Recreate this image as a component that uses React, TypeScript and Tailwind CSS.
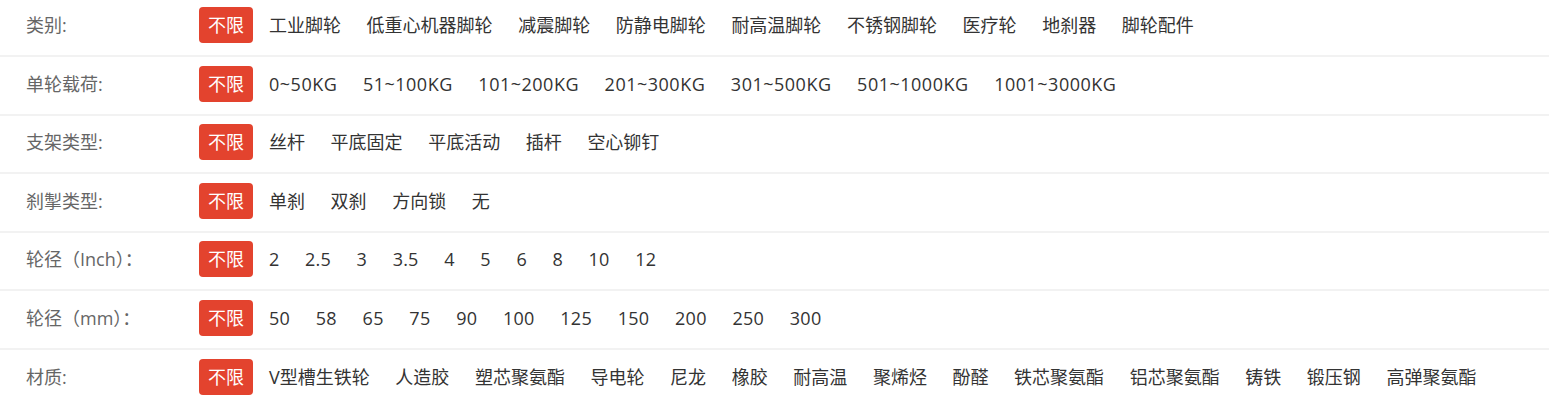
type FilterRow = { label: string; options: string[]; tracking?: string };

const filters: FilterRow[] = [
  {
    label: '类别:',
    options: ['工业脚轮', '低重心机器脚轮', '减震脚轮', '防静电脚轮', '耐高温脚轮', '不锈钢脚轮', '医疗轮', '地刹器', '脚轮配件'],
  },
  {
    label: '单轮载荷:',
    options: ['0~50KG', '51~100KG', '101~200KG', '201~300KG', '301~500KG', '501~1000KG', '1001~3000KG'],
    tracking: 'tracking-[0.5px]',
  },
  {
    label: '支架类型:',
    options: ['丝杆', '平底固定', '平底活动', '插杆', '空心铆钉'],
  },
  {
    label: '刹掣类型:',
    options: ['单刹', '双刹', '方向锁', '无'],
  },
  {
    label: '轮径（Inch）：',
    options: ['2', '2.5', '3', '3.5', '4', '5', '6', '8', '10', '12'],
    tracking: 'tracking-[0.2px]',
  },
  {
    label: '轮径（mm）：',
    options: ['50', '58', '65', '75', '90', '100', '125', '150', '200', '250', '300'],
    tracking: 'tracking-[0.3px]',
  },
  {
    label: '材质:',
    options: ['V型槽生铁轮', '人造胶', '塑芯聚氨酯', '导电轮', '尼龙', '橡胶', '耐高温', '聚烯烃', '酚醛', '铁芯聚氨酯', '铝芯聚氨酯', '铸铁', '锻压钢', '高弹聚氨酯'],
  },
];

export default function App() {
  return (
    <div
      className="w-[1549px] h-[405px] overflow-hidden bg-white text-[18px]"
      style={{ fontFamily: '"Open Sans", "Noto Sans CJK SC", sans-serif' }}
    >
      {filters.map((row, i) => (
        <div
          key={i}
          className="flex items-start pt-[7px] pb-[12px] mb-[1.6px] border-b-2 border-[#f2f2f2] last:border-b-0"
        >
          <div className="w-[199px] shrink-0 pl-[26px] h-[36px] leading-[36px] text-[#666]">
            {row.label}
          </div>
          <div className="flex items-center h-[36px]">
            <span className="h-[36px] leading-[36px] px-[9px] rounded-[4px] bg-[#e3432e] text-white mr-[16px]">
              不限
            </span>
            <div
              className={`flex items-center gap-[25.6px] text-[#333] leading-[36px] whitespace-nowrap ${row.tracking ?? ''}`}
            >
              {row.options.map((opt) => (
                <span key={opt}>{opt}</span>
              ))}
            </div>
          </div>
        </div>
      ))}
    </div>
  );
}
